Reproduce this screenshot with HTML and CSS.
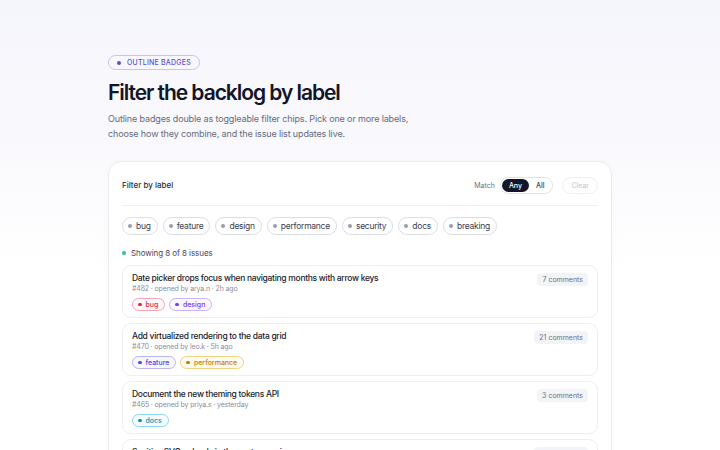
FILE: index.html
```html
<!DOCTYPE html>
<html lang="en">

<head>
    <meta charset="UTF-8">
    <meta name="viewport" content="width=device-width, initial-scale=1.0">
    <title>Filter the backlog by label</title>
    <link rel="stylesheet" href="styles.css">
</head>

<body>

    <div class="page">
        <!-- Intro -->
        <span class="eyebrow"><span class="dot"></span>Outline badges</span>
        <h1>Filter the backlog by label</h1>
        <p class="lead">Outline badges double as toggleable filter chips. Pick one or more labels,<br>choose how they combine, and the issue list updates live.</p>

        <!-- Filter panel -->
        <div class="panel">
            <div class="panel-head">
                <h3>Filter by label</h3>
                <div class="controls">
                    <span class="match-label">Match</span>
                    <div class="segmented">
                        <button class="seg active">Any</button>
                        <button class="seg">All</button>
                    </div>
                    <button class="clear" disabled>Clear</button>
                </div>
            </div>

            <div class="chips">
                <button class="chip"><span class="dot"></span>bug</button>
                <button class="chip"><span class="dot"></span>feature</button>
                <button class="chip"><span class="dot"></span>design</button>
                <button class="chip"><span class="dot"></span>performance</button>
                <button class="chip"><span class="dot"></span>security</button>
                <button class="chip"><span class="dot"></span>docs</button>
                <button class="chip"><span class="dot"></span>breaking</button>
            </div>

            <p class="count"><span class="live"></span>Showing 8 of 8 issues</p>

            <div class="issues">
                <div class="issue">
                    <div class="issue-main">
                        <h4>Date picker drops focus when navigating months with arrow keys</h4>
                        <small>#482 · opened by arya.n · 2h ago</small>
                        <div class="tags">
                            <span class="tag tag-bug"><span class="dot"></span>bug</span>
                            <span class="tag tag-design"><span class="dot"></span>design</span>
                        </div>
                    </div>
                    <span class="comments">7 comments</span>
                </div>

                <div class="issue">
                    <div class="issue-main">
                        <h4>Add virtualized rendering to the data grid</h4>
                        <small>#470 · opened by leo.k · 5h ago</small>
                        <div class="tags">
                            <span class="tag tag-feature"><span class="dot"></span>feature</span>
                            <span class="tag tag-perf"><span class="dot"></span>performance</span>
                        </div>
                    </div>
                    <span class="comments">21 comments</span>
                </div>

                <div class="issue">
                    <div class="issue-main">
                        <h4>Document the new theming tokens API</h4>
                        <small>#465 · opened by priya.s · yesterday</small>
                        <div class="tags">
                            <span class="tag tag-docs"><span class="dot"></span>docs</span>
                        </div>
                    </div>
                    <span class="comments">3 comments</span>
                </div>

                <div class="issue">
                    <div class="issue-main">
                        <h4>Sanitize SVG uploads in the avatar service</h4>
                        <small>#461 · opened by sam.t · 2d ago</small>
                        <div class="tags">
                            <span class="tag tag-security"><span class="dot"></span>security</span>
                        </div>
                    </div>
                    <span class="comments">12 comments</span>
                </div>
            </div>
        </div>
    </div>

</body>

</html>
```

FILE: styles.css
```css
* {
    box-sizing: border-box;
    margin: 0;
    padding: 0;
}

html,
body {
    height: 100%;
    overflow: hidden;
}

body {
    font-family: Inter, 'Noto Sans', sans-serif;
    background: linear-gradient(180deg, #f5f5fc 0%, #f9f9fd 30%, #ffffff 60%);
    color: #14162b;
}

button {
    font-family: inherit;
    border: none;
    background: none;
    cursor: pointer;
}

.dot {
    display: inline-block;
    width: 4px;
    height: 4px;
    border-radius: 50%;
    background-color: currentColor;
    margin-right: 5px;
    flex-shrink: 0;
}

.page {
    width: 504px;
    margin: 0 auto;
    padding-top: 55px;
}

/* Intro */

.eyebrow {
    display: flex;
    width: fit-content;
    align-items: center;
    height: 15px;
    padding: 0 8px;
    border: 1px solid #c8c2ef;
    border-radius: 20px;
    background-color: #f8f7ff;
    color: #5b4fcf;
    font-size: 7px;
    font-weight: 500;
    letter-spacing: 0.03em;
    text-transform: uppercase;
}

.eyebrow .dot {
    margin-right: 6px;
}

h1 {
    margin-top: 9px;
    font-size: 21px;
    font-weight: 600;
    letter-spacing: -0.05em;
    line-height: 28px;
    color: #12142a;
}

.lead {
    margin-top: 4px;
    font-size: 9px;
    line-height: 15px;
    letter-spacing: -0.015em;
    color: #666a7c;
}

/* Filter panel */

.panel {
    margin-top: 20px;
    padding: 8px 13px 14px;
    background-color: #fff;
    border: 1px solid #ebecf1;
    border-radius: 14px;
    box-shadow: 0 2px 8px rgba(20, 22, 43, 0.03);
}

.panel-head {
    display: flex;
    align-items: center;
    justify-content: space-between;
    height: 30px;
    padding-bottom: 5px;
    border-bottom: 1px solid #eeeff3;
    box-sizing: content-box;
}

.panel-head h3 {
    font-size: 8px;
    font-weight: 500;
    color: #2a2c3c;
}

.controls {
    display: flex;
    align-items: center;
}

.match-label {
    font-size: 7px;
    color: #6c7080;
    margin-right: 5px;
}

.segmented {
    display: flex;
    padding: 1px;
    border: 1px solid #dfe1e7;
    border-radius: 20px;
    background-color: #fff;
}

.seg {
    height: 13px;
    padding: 0 7px;
    border-radius: 20px;
    font-size: 7px;
    font-weight: 500;
    color: #3a3d4d;
}

.seg.active {
    background-color: #13162b;
    color: #fff;
}

.clear {
    margin-left: 9px;
    height: 17px;
    padding: 0 8px;
    border: 1px solid #eeeff3;
    border-radius: 20px;
    font-size: 7px;
    color: #c2c5cf;
    cursor: default;
}

.chips {
    display: flex;
    flex-wrap: wrap;
    gap: 5px;
    margin-top: 11px;
}

.chip {
    display: inline-flex;
    align-items: center;
    height: 18px;
    padding: 0 6px 0 5px;
    border: 1px solid #dcdee5;
    border-radius: 20px;
    background-color: #fff;
    font-size: 8.5px;
    letter-spacing: -0.03em;
    color: #3b3e4e;
}

.chip .dot {
    background-color: #9a9dab;
    margin-right: 4px;
}

.count {
    display: flex;
    align-items: center;
    margin-top: 13px;
    font-size: 8px;
    letter-spacing: -0.01em;
    color: #454859;
}

.live {
    width: 4px;
    height: 4px;
    border-radius: 50%;
    background-color: #34c38f;
    margin-right: 5px;
}

/* Issue list */

.issues {
    display: flex;
    flex-direction: column;
    gap: 5px;
    margin-top: 7px;
}

.issue {
    display: flex;
    justify-content: space-between;
    align-items: flex-start;
    height: 53px;
    padding: 6px 9px;
    border: 1px solid #eceef2;
    border-radius: 9px;
    background-color: #fff;
}

.issue h4 {
    font-size: 8.5px;
    font-weight: 500;
    line-height: 12px;
    letter-spacing: -0.035em;
    color: #1b1d2d;
}

.issue small {
    display: block;
    margin-top: 0;
    font-size: 7px;
    letter-spacing: -0.02em;
    color: #8b8e9c;
}

.tags {
    display: flex;
    gap: 4px;
    margin-top: 5px;
}

.tag {
    display: inline-flex;
    align-items: center;
    height: 13px;
    padding: 0 6px 0 5px;
    border: 1px solid;
    border-radius: 20px;
    font-size: 7px;
    font-weight: 500;
}

.tag .dot {
    width: 3.5px;
    height: 3.5px;
    margin-right: 4px;
}

.tag-bug {
    color: #e0294a;
    border-color: #f4a3b2;
    background-color: #fff7f8;
}

.tag-design {
    color: #7c3aed;
    border-color: #c9b2f6;
    background-color: #faf7ff;
}

.tag-feature {
    color: #4f46e5;
    border-color: #b9b5f3;
    background-color: #f7f7ff;
}

.tag-perf {
    color: #c87a07;
    border-color: #f3d27f;
    background-color: #fffbef;
}

.tag-docs {
    color: #0b8fb8;
    border-color: #8dd6ec;
    background-color: #f4fcff;
}

.tag-security {
    color: #0f9a6e;
    border-color: #9bdcc4;
    background-color: #f4fcf8;
}

.comments {
    margin-top: 1px;
    padding: 2px 5px;
    border-radius: 4px;
    background-color: #f2f4f8;
    font-size: 7px;
    color: #6c7080;
    white-space: nowrap;
}
```
